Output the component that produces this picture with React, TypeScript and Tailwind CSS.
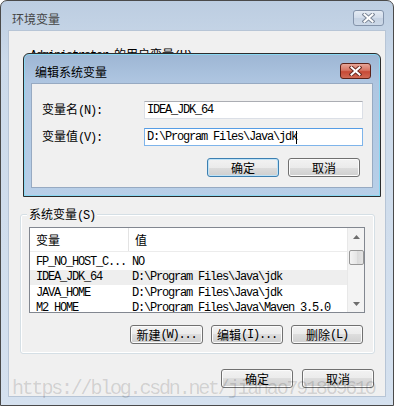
import React from "react";

const zh = "font-['Noto_Sans_CJK_SC',sans-serif] text-[12px] leading-[14px]";
const mono = "font-['Liberation_Mono','Noto_Sans_CJK_SC',monospace] text-[12px] leading-[14px] tracking-[-1.2px]";

const CloseX = ({ outline }: { outline: string }) => (
  <svg width="13" height="10" viewBox="0 0 13 10">
    <path d="M2.5 1.5 L10.5 8.5 M10.5 1.5 L2.5 8.5" stroke={outline} strokeWidth="4" strokeLinecap="square" />
    <path d="M2.5 1.5 L10.5 8.5 M10.5 1.5 L2.5 8.5" stroke="#ffffff" strokeWidth="2" strokeLinecap="square" />
  </svg>
);

const Btn = ({ children, focus = false, wide = false }: { children: React.ReactNode; focus?: boolean; wide?: boolean }) => (
  <div
    className={`${wide ? "w-[73px]" : "w-[72px]"} h-[19px] rounded-[3px] border flex items-center justify-center text-black bg-[linear-gradient(#f2f2f2,#ebebeb_50%,#dddddd_50%,#cfcfcf)] ${
      focus ? "border-[#3c7fb1] shadow-[inset_0_0_0_1px_#bfe3f7]" : "border-[#707070] shadow-[inset_0_0_0_1px_#fbfbfb]"
    }`}
  >
    {children}
  </div>
);

const rows = [
  { name: "FP_NO_HOST_C...", value: "NO" },
  { name: "IDEA_JDK_64", value: "D:\\Program Files\\Java\\jdk", hl: true },
  { name: "JAVA_HOME", value: "D:\\Program Files\\Java\\jdk" },
  { name: "M2_HOME", value: "D:\\Program Files\\Java\\Maven 3.5.0" },
];

const App = () => {
  return (
    <div className="relative w-[394px] h-[406px] overflow-hidden border border-[#4a4a4a] rounded-t-[7px] bg-[linear-gradient(#bccde1,#ccdaea_60px,#d5e1ef)]">
      {/* outer title bar */}
      <div className="h-[29px] flex justify-between">
        <span className={`${zh} text-[#454545] ml-[11px] mt-[11px]`}>环境变量</span>
        <div className="mt-[9px] mr-[9px] w-[31px] h-[16px] rounded-[3px] border border-[#8494ab] bg-[linear-gradient(#e4ebf4,#d2dcea_50%,#c5d2e3_50%,#cdd9e8)] flex items-center justify-center">
          <CloseX outline="#7d8899" />
        </div>
      </div>

      {/* outer client area */}
      <div className="mx-[7px] h-[367px] bg-[#f0f0f0] border border-[#b7c5d6] flex flex-col">
        <div className={`${zh} ml-[21px] mt-[16px] text-black`}>
          <span className={mono}>Administrator </span>的用户变量<span className={mono}>(U)</span>
        </div>

        {/* system variables group */}
        <div className="relative ml-[11px] mt-[151px] w-[355px] h-[140px] rounded-[3px] border border-[#d5dfe5] shadow-[inset_0_0_0_1px_#ffffff] flex flex-col">
          <div className={`absolute -top-[8px] left-[6px] px-[2px] bg-[#f0f0f0] ${zh} text-black`}>
            系统变量<span className={mono}>(S)</span>
          </div>

          <div className="ml-[8px] mt-[12px] w-[336px] h-[86px] border border-[#828790] bg-white flex overflow-hidden">
            <div className="flex-1 flex flex-col">
              <div className="h-[24px] flex border-b border-[#ececec] shrink-0">
                <div className={`w-[99px] pl-[6px] flex items-center border-r border-[#e3e3e3] ${zh} text-black`}>变量</div>
                <div className={`pl-[6px] flex items-center ${zh} text-black`}>值</div>
              </div>
              <div className="pt-[2px]">
                {rows.map((r) => (
                  <div key={r.name} className={`h-[15.5px] flex items-center ${r.hl ? "bg-[#eeeeee]" : ""}`}>
                    <div className={`w-[99px] pl-[6px] ${mono} text-black whitespace-pre`}>{r.name}</div>
                    <div className={`pl-[3px] ${mono} text-black whitespace-pre`}>{r.value}</div>
                  </div>
                ))}
              </div>
            </div>
            <div className="w-[17px] bg-[#f3f3f3] border-l border-[#e8e8e8] flex flex-col items-center">
              <div className="h-[17px] flex items-center justify-center">
                <svg width="7" height="4" viewBox="0 0 7 4"><path d="M3.5 0 L7 4 L0 4 Z" fill="#6d6d6d" /></svg>
              </div>
              <div className="mt-[5px] w-[15px] h-[15px] rounded-[2px] border border-[#979797] bg-[linear-gradient(90deg,#f3f3f3,#e6e6e6_50%,#d9d9d9_50%,#e4e4e4)]" />
              <div className="flex-1" />
              <div className="h-[17px] flex items-center justify-center">
                <svg width="7" height="4" viewBox="0 0 7 4"><path d="M0 0 L7 0 L3.5 4 Z" fill="#6d6d6d" /></svg>
              </div>
            </div>
          </div>

          <div className={`mt-[12px] pr-[11px] flex justify-end gap-[8px] ${zh}`}>
            <Btn wide>新建<span className={mono}>(W)...</span></Btn>
            <Btn>编辑<span className={mono}>(I)...</span></Btn>
            <Btn>删除<span className={mono}>(L)</span></Btn>
          </div>
        </div>

        <div className={`mt-[15px] pr-[11px] flex justify-end gap-[9px] ${zh}`}>
          <Btn>确定</Btn>
          <Btn>取消</Btn>
        </div>
      </div>

      {/* edit dialog on top */}
      <div className="absolute left-[22px] top-[52px] w-[358px] h-[144px] border border-[#2c2c2c] rounded-t-[6px] bg-[linear-gradient(#9db6d4,#afc6e1_29px,#b8cfe8)] shadow-[inset_0_0_0_1px_#8ad8f3] flex flex-col">
        <div className="h-[29px] flex justify-between shrink-0">
          <span className={`${zh} text-black ml-[11px] mt-[11px]`}>编辑系统变量</span>
          <div className="mt-[9px] mr-[9px] w-[31px] h-[16px] rounded-[3px] border border-[#5d2219] bg-[linear-gradient(#e7a597,#d77563_45%,#c74a36_55%,#d06a55)] flex items-center justify-center">
            <CloseX outline="#6b2a20" />
          </div>
        </div>

        <div className="mx-[7px] h-[105px] bg-[#f0f0f0] border border-[#97aac2] flex flex-col">
          <div className="mt-[17px] pl-[10px] pr-[9px] flex items-center">
            <div className={`w-[102px] ${zh} text-black`}>
              变量名<span className={mono}>(N):</span>
            </div>
            <div className="flex-1 h-[18px] bg-white border border-[#dbdfe6] border-t-[#abadb3] flex items-center pl-[2px]">
              <span className={`${mono} text-black`}>IDEA_JDK_64</span>
            </div>
          </div>
          <div className="mt-[9px] pl-[10px] pr-[9px] flex items-center">
            <div className={`w-[102px] ${zh} text-black`}>
              变量值<span className={mono}>(V):</span>
            </div>
            <div className="flex-1 h-[18px] bg-white border border-[#7eb4ea] border-t-[#569de5] flex items-center pl-[2px]">
              <span className={`${mono} text-black whitespace-pre`}>D:\Program Files\Java\jdk</span>
              <span className="w-[1px] h-[13px] bg-black -ml-[1px]" />
            </div>
          </div>
          <div className={`mt-[12px] pr-[12px] flex justify-end gap-[9px] ${zh}`}>
            <Btn focus>确定</Btn>
            <Btn>取消</Btn>
          </div>
        </div>
      </div>

      {/* watermark */}
      <div className="absolute left-[11px] top-[376px] pointer-events-none font-['Liberation_Mono',monospace] text-[20px] leading-[24px] tracking-[-2.2px] text-black/[0.14] whitespace-nowrap">
        https://blog.csdn.net/jiahao791869610
      </div>
    </div>
  );
};

export default App;
